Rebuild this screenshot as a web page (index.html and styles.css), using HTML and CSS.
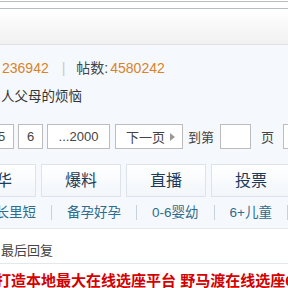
FILE: index.html
```html
<!DOCTYPE html>
<html lang="zh-CN">
<head>
    <meta charset="UTF-8">
    <meta name="viewport" content="width=device-width, initial-scale=1.0">
    <title>论坛版块</title>
    <link rel="stylesheet" href="styles.css">
</head>
<body>
    <!-- Top bars -->
    <div class="topbar"></div>
    <div class="header"></div>

    <div class="main">
        <!-- Forum stats -->
        <div class="stats">
            <span class="num">236942</span>
            <span class="sep">|</span>
            <span class="label">帖数:</span>
            <span class="num">4580242</span>
        </div>

        <div class="title">人父母的烦恼</div>

        <!-- Pagination -->
        <div class="pager">
            <a class="page page-cut">5</a>
            <a class="page">6</a>
            <a class="page page-wide">...2000</a>
            <a class="page page-next">下一页<span class="arrow"></span></a>
            <span class="goto">到第</span>
            <input class="page-input" type="text">
            <span class="goto goto-end">页</span>
            <a class="page page-go"></a>
        </div>

        <!-- Category tabs -->
        <div class="tabs">
            <div class="tab">精华</div>
            <div class="tab">爆料</div>
            <div class="tab">直播</div>
            <div class="tab">投票</div>
        </div>

        <!-- Sub categories -->
        <div class="subnav">
            <a class="sub">家长里短</a>
            <a class="sub">备孕好孕</a>
            <a class="sub">0-6婴幼</a>
            <a class="sub">6+儿童</a>
            <a class="sub">更多</a>
        </div>
    </div>

    <!-- Thread list -->
    <div class="list">
        <div class="list-head">最后回复</div>
        <div class="ad">打造本地最大在线选座平台 野马渡在线选座6折</div>
    </div>
</body>
</html>
```

FILE: styles.css
```css
/* General styles */
body {
    margin: 0;
    width: 288px;
    height: 288px;
    overflow: hidden;
    font-family: "Liberation Sans", "Noto Sans CJK SC", sans-serif;
    font-size: 14px;
    color: #444;
    background: #fff;
}

a {
    text-decoration: none;
}

/* Top bars */
.topbar {
    margin-top: 1px;
    height: 6px;
    border-top: 1px solid #b4bcc4;
    border-bottom: 1px solid #b4bcc4;
    background: #fff;
}

.header {
    height: 35px;
    background: linear-gradient(#ffffff, #f1f1f1);
    border-bottom: 1px solid #e0e0e0;
}

/* Main area */
.main {
    background: #f5f9fd;
    padding-top: 13px;
}

.stats {
    display: flex;
    align-items: center;
    height: 20px;
    padding-left: 2px;
    line-height: 20px;
}

.stats .num {
    color: #d9822b;
}

.stats .sep {
    color: #c8c8c8;
    margin: 0 11px 0 13px;
}

.stats .label {
    margin-right: 2px;
}

.title {
    margin-top: 9px;
    height: 20px;
    line-height: 20px;
    padding-left: 1px;
    font-size: 13.5px;
    color: #333;
}

/* Pagination */
.pager {
    display: flex;
    align-items: center;
    gap: 4px;
    margin: 17px 0 0 -11px;
    height: 25px;
    font-size: 13px;
    white-space: nowrap;
}

.pager > * {
    flex-shrink: 0;
}

.page {
    box-sizing: border-box;
    display: flex;
    align-items: center;
    justify-content: center;
    height: 25px;
    width: 25px;
    border: 1px solid #bcbcbc;
    background: #fff;
    color: #444;
}

.page-wide {
    width: 63px;
}

.page-next {
    width: 68px;
    margin-left: 1px;
    padding-left: 3px;
}

.arrow {
    display: inline-block;
    margin-left: 5px;
    border-left: 5px solid #999;
    border-top: 4px solid transparent;
    border-bottom: 4px solid transparent;
}

.goto {
    margin-left: 1px;
    color: #444;
}

.goto-end {
    margin-left: 4px;
}

.page-input {
    box-sizing: border-box;
    width: 31px;
    height: 25px;
    margin: 0 2px;
    border: 1px solid #bcbcbc;
    background: #fff;
    padding: 0;
}

.page-go {
    margin-left: 5px;
    width: 30px;
}

/* Tabs */
.tabs {
    display: flex;
    gap: 5px;
    margin: 15px 0 0 -44px;
}

.tab {
    box-sizing: border-box;
    flex: 0 0 80px;
    height: 33px;
    line-height: 31px;
    text-align: center;
    font-size: 16px;
    color: #1e3a58;
    border: 1px solid #dde3ea;
    background: linear-gradient(#ffffff, #f2f6fa);
}

/* Sub categories */
.subnav {
    display: flex;
    align-items: center;
    height: 31px;
    margin-left: -33px;
    white-space: nowrap;
}

.sub {
    flex-shrink: 0;
    padding: 0 15px;
    line-height: 15px;
    font-size: 13.5px;
    color: #2d6d8e;
    border-right: 1px solid #c9d2da;
}

/* Thread list */
.list {
    border-top: 1px solid #e3e8ee;
}

.list-head {
    height: 35px;
    box-sizing: border-box;
    padding: 12px 0 0 1px;
    line-height: 20px;
    font-size: 13px;
    border-bottom: 1px solid #e3e8ee;
    color: #444;
}

.ad {
    margin-left: -4px;
    padding-top: 7px;
    line-height: 20px;
    font-size: 15px;
    font-weight: bold;
    color: #d40000;
    white-space: nowrap;
}
```
